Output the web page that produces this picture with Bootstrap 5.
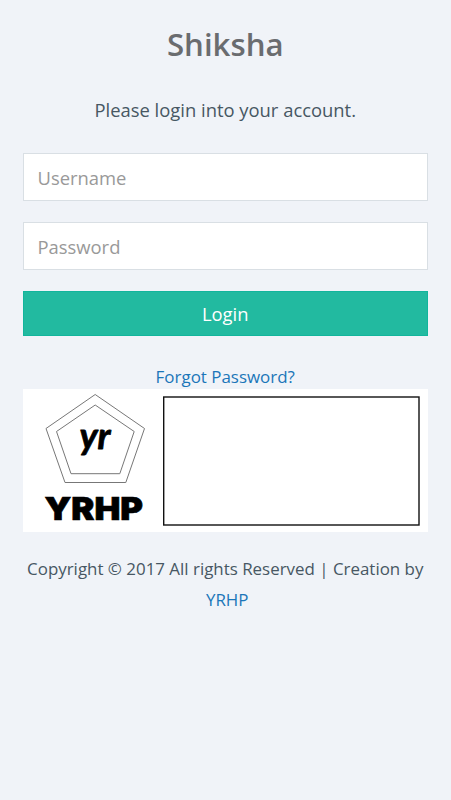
<!DOCTYPE html>
<html lang="en">
<head>
<meta charset="utf-8">
<meta name="viewport" content="width=device-width, initial-scale=1">
<title>Shiksha</title>
<link href="https://cdn.jsdelivr.net/npm/bootstrap@5.3.0/dist/css/bootstrap.min.css" rel="stylesheet">
<style>
body { background: #f0f3f8; font-family: "Open Sans", sans-serif; color: #475763; }
.login-page { padding: 21px 23px 0 22.5px; }
.login-title { font-size: 31.2px; font-weight: 600; line-height: 46px; color: #6a6c6f; margin-bottom: 27px; }
.login-lead { font-size: 18.4px; line-height: 31px; margin-bottom: 28px; }
.login-input, .login-input:focus { height: 48px; padding: 0 14px; font-size: 18.4px; line-height: 46px; border: 1.4px solid #d9dfe4; border-radius: 0; box-shadow: none; margin-bottom: 21px; }
.login-input::placeholder { color: #999; opacity: 1; }
.login-btn { height: 45px; padding: 0; font-size: 18.4px; font-weight: 500; line-height: 42px; color: #fff; background: #22baa0; border: 1px solid #12b59c; border-radius: 0; }
.login-btn:hover { color: #fff; background: #12afa0; }
.login-link { color: #1b76b9; }
.login-forgot { font-size: 16.95px; line-height: 24px; margin-top: 29px; }
.login-brand { height: 143px; }
.login-copy { font-size: 16.92px; line-height: 31px; margin-top: 21px; white-space: nowrap; }
</style>
<script src="https://cdn.jsdelivr.net/npm/bootstrap@5.3.0/dist/js/bootstrap.bundle.min.js"></script>
</head>
<body>
<main class="login-page text-center">
  <h1 class="login-title">Shiksha</h1>
  <p class="login-lead">Please login into your account.</p>
  <form>
    <input type="text" class="form-control login-input" placeholder="Username" aria-label="Username">
    <input type="password" class="form-control login-input" placeholder="Password" aria-label="Password">
    <button type="button" class="btn login-btn d-block w-100">Login</button>
    <a href="#" class="login-link login-forgot d-block text-decoration-none">Forgot Password?</a>
  </form>
  <svg class="login-brand d-block w-100 bg-white" viewBox="22.5 389 405.5 143" preserveAspectRatio="none">
    <g fill="none" stroke="#777" stroke-width="1">
      <path d="M94.7 394.5 144 428.5 125.3 482.5H64.5L45.5 428.5Z"/>
      <path d="M94.7 405 133.7 431.5 119.3 473.7H70.5L56 431.5Z"/>
    </g>
    <text x="79" y="449" font-family="Lato, sans-serif" font-size="36" font-weight="700" font-style="italic" textLength="31" lengthAdjust="spacingAndGlyphs" stroke="#000" stroke-width=".8" stroke-linejoin="round">yr</text>
    <text x="44" y="520" font-family="Inter, sans-serif" font-size="31.5" font-weight="900" textLength="98.5" lengthAdjust="spacingAndGlyphs" stroke="#000" stroke-width=".7">YRHP</text>
    <rect x="163.2" y="397" width="255.3" height="128" fill="none" stroke="#111" stroke-width="1.4"/>
  </svg>
  <footer class="login-copy">Copyright © 2017 All rights Reserved | Creation by<br><a href="#" class="login-link text-decoration-none ps-1">YRHP</a></footer>
</main>
</body>
</html>
